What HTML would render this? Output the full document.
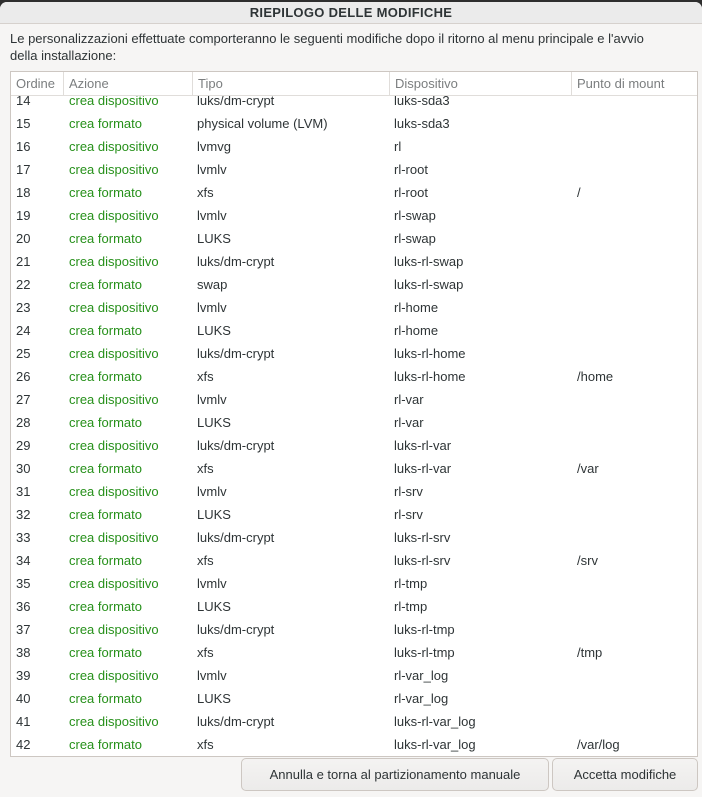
<!DOCTYPE html>
<html><head><meta charset="utf-8"><style>
*{margin:0;padding:0;box-sizing:border-box}
body{width:702px;height:797px;background:#2e2e2e;font-family:"Liberation Sans","DejaVu Sans",sans-serif;font-size:13px;color:#2e3436;position:relative;overflow:hidden}
.dlg{position:absolute;left:0;top:2px;width:702px;height:795px;background:#f6f5f4;border-radius:7px 7px 0 0}
.title{height:22px;border-bottom:1px solid #d6d1cd;background:#ebebeb;border-radius:7px 7px 0 0;text-align:center;font-weight:bold;line-height:22px;font-size:13px;letter-spacing:.3px}
.msg{position:absolute;left:10px;top:30px;width:655px;line-height:17px}
.tbl{position:absolute;left:10px;top:71px;width:688px;height:686px;border:1px solid #cdc7c2;background:#fff;overflow:hidden}
.hd{position:absolute;left:0;top:0;width:100%;height:24px;background:#fff;border-bottom:1px solid #e0ddda;color:#7b7e7f;z-index:2}
.hd span{position:absolute;top:0;line-height:24px;padding-left:5px;border-left:1px solid #e0ddda;height:24px}
.rows{position:absolute;left:0;top:17px;width:100%}
.r{height:23px;line-height:23px;position:relative}
.r span{position:absolute;top:0}
.g{color:#26901a}
.btn{position:absolute;top:758px;height:33px;border:1px solid #cdc7c2;border-radius:5px;background:linear-gradient(#f4f3f2,#ecebea);text-align:center;line-height:31px}
</style></head><body>
<div class="dlg">
<div class="title">RIEPILOGO DELLE MODIFICHE</div>
</div>
<div class="msg">Le personalizzazioni effettuate comporteranno le seguenti modifiche dopo il ritorno al menu principale e l'avvio della installazione:</div>
<div class="tbl">
<div class="hd"><span style="left:0;border:none;padding-left:5px">Ordine</span><span style="left:52px">Azione</span><span style="left:181px">Tipo</span><span style="left:378px">Dispositivo</span><span style="left:560px">Punto di mount</span></div>
<div class="rows" id="rows">
<div class="r"><span style="left:5px">14</span><span class="g" style="left:58px">crea dispositivo</span><span style="left:186px">luks/dm-crypt</span><span style="left:383px">luks-sda3</span></div>
<div class="r"><span style="left:5px">15</span><span class="g" style="left:58px">crea formato</span><span style="left:186px">physical volume (LVM)</span><span style="left:383px">luks-sda3</span></div>
<div class="r"><span style="left:5px">16</span><span class="g" style="left:58px">crea dispositivo</span><span style="left:186px">lvmvg</span><span style="left:383px">rl</span></div>
<div class="r"><span style="left:5px">17</span><span class="g" style="left:58px">crea dispositivo</span><span style="left:186px">lvmlv</span><span style="left:383px">rl-root</span></div>
<div class="r"><span style="left:5px">18</span><span class="g" style="left:58px">crea formato</span><span style="left:186px">xfs</span><span style="left:383px">rl-root</span><span style="left:566px">/</span></div>
<div class="r"><span style="left:5px">19</span><span class="g" style="left:58px">crea dispositivo</span><span style="left:186px">lvmlv</span><span style="left:383px">rl-swap</span></div>
<div class="r"><span style="left:5px">20</span><span class="g" style="left:58px">crea formato</span><span style="left:186px">LUKS</span><span style="left:383px">rl-swap</span></div>
<div class="r"><span style="left:5px">21</span><span class="g" style="left:58px">crea dispositivo</span><span style="left:186px">luks/dm-crypt</span><span style="left:383px">luks-rl-swap</span></div>
<div class="r"><span style="left:5px">22</span><span class="g" style="left:58px">crea formato</span><span style="left:186px">swap</span><span style="left:383px">luks-rl-swap</span></div>
<div class="r"><span style="left:5px">23</span><span class="g" style="left:58px">crea dispositivo</span><span style="left:186px">lvmlv</span><span style="left:383px">rl-home</span></div>
<div class="r"><span style="left:5px">24</span><span class="g" style="left:58px">crea formato</span><span style="left:186px">LUKS</span><span style="left:383px">rl-home</span></div>
<div class="r"><span style="left:5px">25</span><span class="g" style="left:58px">crea dispositivo</span><span style="left:186px">luks/dm-crypt</span><span style="left:383px">luks-rl-home</span></div>
<div class="r"><span style="left:5px">26</span><span class="g" style="left:58px">crea formato</span><span style="left:186px">xfs</span><span style="left:383px">luks-rl-home</span><span style="left:566px">/home</span></div>
<div class="r"><span style="left:5px">27</span><span class="g" style="left:58px">crea dispositivo</span><span style="left:186px">lvmlv</span><span style="left:383px">rl-var</span></div>
<div class="r"><span style="left:5px">28</span><span class="g" style="left:58px">crea formato</span><span style="left:186px">LUKS</span><span style="left:383px">rl-var</span></div>
<div class="r"><span style="left:5px">29</span><span class="g" style="left:58px">crea dispositivo</span><span style="left:186px">luks/dm-crypt</span><span style="left:383px">luks-rl-var</span></div>
<div class="r"><span style="left:5px">30</span><span class="g" style="left:58px">crea formato</span><span style="left:186px">xfs</span><span style="left:383px">luks-rl-var</span><span style="left:566px">/var</span></div>
<div class="r"><span style="left:5px">31</span><span class="g" style="left:58px">crea dispositivo</span><span style="left:186px">lvmlv</span><span style="left:383px">rl-srv</span></div>
<div class="r"><span style="left:5px">32</span><span class="g" style="left:58px">crea formato</span><span style="left:186px">LUKS</span><span style="left:383px">rl-srv</span></div>
<div class="r"><span style="left:5px">33</span><span class="g" style="left:58px">crea dispositivo</span><span style="left:186px">luks/dm-crypt</span><span style="left:383px">luks-rl-srv</span></div>
<div class="r"><span style="left:5px">34</span><span class="g" style="left:58px">crea formato</span><span style="left:186px">xfs</span><span style="left:383px">luks-rl-srv</span><span style="left:566px">/srv</span></div>
<div class="r"><span style="left:5px">35</span><span class="g" style="left:58px">crea dispositivo</span><span style="left:186px">lvmlv</span><span style="left:383px">rl-tmp</span></div>
<div class="r"><span style="left:5px">36</span><span class="g" style="left:58px">crea formato</span><span style="left:186px">LUKS</span><span style="left:383px">rl-tmp</span></div>
<div class="r"><span style="left:5px">37</span><span class="g" style="left:58px">crea dispositivo</span><span style="left:186px">luks/dm-crypt</span><span style="left:383px">luks-rl-tmp</span></div>
<div class="r"><span style="left:5px">38</span><span class="g" style="left:58px">crea formato</span><span style="left:186px">xfs</span><span style="left:383px">luks-rl-tmp</span><span style="left:566px">/tmp</span></div>
<div class="r"><span style="left:5px">39</span><span class="g" style="left:58px">crea dispositivo</span><span style="left:186px">lvmlv</span><span style="left:383px">rl-var_log</span></div>
<div class="r"><span style="left:5px">40</span><span class="g" style="left:58px">crea formato</span><span style="left:186px">LUKS</span><span style="left:383px">rl-var_log</span></div>
<div class="r"><span style="left:5px">41</span><span class="g" style="left:58px">crea dispositivo</span><span style="left:186px">luks/dm-crypt</span><span style="left:383px">luks-rl-var_log</span></div>
<div class="r"><span style="left:5px">42</span><span class="g" style="left:58px">crea formato</span><span style="left:186px">xfs</span><span style="left:383px">luks-rl-var_log</span><span style="left:566px">/var/log</span></div>
</div>
</div>
<div class="btn" style="left:241px;width:308px">Annulla e torna al partizionamento manuale</div>
<div class="btn" style="left:552px;width:146px">Accetta modifiche</div>
</body></html>
